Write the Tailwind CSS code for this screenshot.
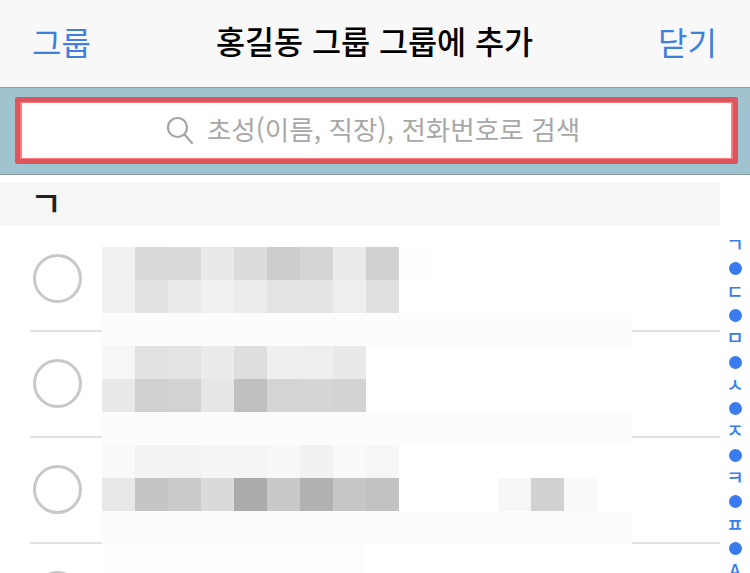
<!DOCTYPE html>
<html lang="ko">
<head>
  <meta charset="UTF-8" />
  <title>그룹에 추가</title>
  <script src="https://cdn.jsdelivr.net/npm/@tailwindcss/browser@4"></script>
</head>
<body class="bg-white font-['Noto_Sans_CJK_KR',sans-serif]">
  <div class="relative h-[573px] w-[750px] overflow-hidden">

    <!-- Header -->
    <header class="flex h-[87px] items-center justify-between bg-[#f8f8f8] pr-[33px] pl-[32px] pb-[5px]">
      <span class="text-[32px] leading-none text-[#3f7fe0]">그룹</span>
      <h1 class="text-[31.6px] leading-none font-medium text-black">홍길동 그룹 그룹에 추가</h1>
      <span class="text-[32px] leading-none text-[#3f7fe0]">닫기</span>
    </header>

    <!-- Search -->
    <div class="h-[88px] border-y border-[#8b9ea7] bg-[#a0c3d0] pt-[9px] pr-[12px] pl-[15px]">
      <div class="h-[67px] rounded-[2px] border-[5px] border-[#d9575d]">
        <div class="flex h-full items-center justify-center gap-[13px] border-x-2 border-y border-[#ff7a7c] bg-white pr-[7px] pb-[2px]">
          <svg class="h-[28px] w-[28px]" viewBox="0 0 28 28" fill="none" stroke="#a3a3a3" stroke-width="2.2">
            <circle cx="11.5" cy="11.5" r="9.5" />
            <path d="M18.5 18.5L26 27" stroke-linecap="round" />
          </svg>
          <span class="text-[26.6px] leading-none text-[#a8a8a8]">초성(이름, 직장), 전화번호로 검색</span>
        </div>
      </div>
    </div>

    <!-- Section title -->
    <div class="mt-[7px] flex h-[44px] w-[720px] items-center bg-[#f6f6f6] pb-[6px] pl-[30px]">
      <span class="text-[35px] leading-none font-medium text-[#222]">ㄱ</span>
    </div>

    <!-- Row 1 -->
    <div class="flex h-[106px]">
      <div class="ml-[30px] w-[72px] border-b-2 border-[#e2e2e4] pt-[28px] pl-[3px]">
        <div class="h-[49px] w-[49px] rounded-full border-[3px] border-[#c8c8cc]"></div>
      </div>
      <div class="w-[530px]">
        <div class="h-[21px]"></div>
        <div class="flex h-[33px]">
          <div class="w-[33px] bg-[#f1f1f1]"></div><div class="w-[33px] bg-[#d9d9d9]"></div><div class="w-[33px] bg-[#dadada]"></div><div class="w-[33px] bg-[#e9e9e9]"></div><div class="w-[33px] bg-[#dcdcdc]"></div><div class="w-[33px] bg-[#cdcdcd]"></div><div class="w-[33px] bg-[#d4d4d4]"></div><div class="w-[33px] bg-[#ebebeb]"></div><div class="w-[33px] bg-[#d1d1d1]"></div><div class="w-[33px] bg-[#fdfdfd]"></div>
        </div>
        <div class="flex h-[33px]">
          <div class="w-[33px] bg-[#f1f1f1]"></div><div class="w-[33px] bg-[#e2e2e2]"></div><div class="w-[33px] bg-[#ebebeb]"></div><div class="w-[33px] bg-[#f0f0f0]"></div><div class="w-[33px] bg-[#ececec]"></div><div class="w-[33px] bg-[#e3e3e3]"></div><div class="w-[33px] bg-[#e4e4e4]"></div><div class="w-[33px] bg-[#eeeeee]"></div><div class="w-[33px] bg-[#e0e0e0]"></div>
        </div>
        <div class="h-[19px] bg-[#fcfcfc]"></div>
      </div>
      <div class="w-[88px] border-b-2 border-[#e2e2e4]"></div>
    </div>

    <!-- Row 2 -->
    <div class="flex h-[106px]">
      <div class="ml-[30px] w-[72px] border-b-2 border-[#e2e2e4] pt-[27px] pl-[3px]">
        <div class="h-[49px] w-[49px] rounded-full border-[3px] border-[#c8c8cc]"></div>
      </div>
      <div class="w-[530px]">
        <div class="h-[14px] bg-[#fcfcfc]"></div>
        <div class="flex h-[33px]">
          <div class="w-[33px] bg-[#f6f6f6]"></div><div class="w-[33px] bg-[#e2e2e2]"></div><div class="w-[33px] bg-[#e3e3e3]"></div><div class="w-[33px] bg-[#ebebeb]"></div><div class="w-[33px] bg-[#dedede]"></div><div class="w-[33px] bg-[#efefef]"></div><div class="w-[33px] bg-[#eeeeee]"></div><div class="w-[33px] bg-[#e9e9e9]"></div>
        </div>
        <div class="flex h-[33px]">
          <div class="w-[33px] bg-[#e9e9e9]"></div><div class="w-[33px] bg-[#d0d0d0]"></div><div class="w-[33px] bg-[#d2d2d2]"></div><div class="w-[33px] bg-[#e6e6e6]"></div><div class="w-[33px] bg-[#c0c0c0]"></div><div class="w-[33px] bg-[#d4d4d4]"></div><div class="w-[33px] bg-[#d5d5d5]"></div><div class="w-[33px] bg-[#d3d3d3]"></div>
        </div>
        <div class="h-[26px] bg-[#fcfcfc]"></div>
      </div>
      <div class="w-[88px] border-b-2 border-[#e2e2e4]"></div>
    </div>

    <!-- Row 3 -->
    <div class="flex h-[106px]">
      <div class="ml-[30px] w-[72px] border-b-2 border-[#e2e2e4] pt-[27px] pl-[3px]">
        <div class="h-[49px] w-[49px] rounded-full border-[3px] border-[#c8c8cc]"></div>
      </div>
      <div class="w-[530px]">
        <div class="h-[7px] bg-[#fcfcfc]"></div>
        <div class="flex h-[33px]">
          <div class="w-[33px] bg-[#f9f9f9]"></div><div class="w-[33px] bg-[#f3f3f3]"></div><div class="w-[33px] bg-[#f3f3f3]"></div><div class="w-[33px] bg-[#f5f5f5]"></div><div class="w-[33px] bg-[#f4f4f4]"></div><div class="w-[33px] bg-[#f7f7f7]"></div><div class="w-[33px] bg-[#f1f1f1]"></div><div class="w-[33px] bg-[#f9f9f9]"></div><div class="w-[33px] bg-[#f6f6f6]"></div>
        </div>
        <div class="flex h-[33px]">
          <div class="w-[33px] bg-[#e8e8e8]"></div><div class="w-[33px] bg-[#c5c5c5]"></div><div class="w-[33px] bg-[#cbcbcb]"></div><div class="w-[33px] bg-[#dadada]"></div><div class="w-[33px] bg-[#ababab]"></div><div class="w-[33px] bg-[#c9c9c9]"></div><div class="w-[33px] bg-[#b1b1b1]"></div><div class="w-[33px] bg-[#c6c6c6]"></div><div class="w-[33px] bg-[#c2c2c2]"></div>
          <div class="w-[99px]"></div>
          <div class="w-[33px] bg-[#f6f6f6]"></div><div class="w-[33px] bg-[#d1d1d1]"></div><div class="w-[33px] bg-[#f9f9f9]"></div>
        </div>
        <div class="h-[33px] bg-[#fcfcfc]"></div>
      </div>
      <div class="w-[88px] border-b-2 border-[#e2e2e4]"></div>
    </div>

    <!-- Row 4, cut off by the window -->
    <div class="flex h-[106px]">
      <div class="ml-[30px] w-[72px] pt-[27px] pl-[3px]">
        <div class="h-[49px] w-[49px] rounded-full border-[3px] border-[#c8c8cc]"></div>
      </div>
      <div class="h-[29px] w-[261px] bg-[#fdfdfd]"></div>
    </div>

    <!-- Index bar -->
    <div class="absolute top-[234px] right-0 flex w-[30px] flex-col items-center text-[19px] leading-[19px] font-medium text-[#3a7bf0]">
      <span class="h-[23.3px]">ㄱ</span>
      <span class="flex h-[23.3px] items-center"><i class="h-[13px] w-[13px] rounded-full bg-[#3a7bf0]"></i></span>
      <span class="h-[23.3px]">ㄷ</span>
      <span class="flex h-[23.3px] items-center"><i class="h-[13px] w-[13px] rounded-full bg-[#3a7bf0]"></i></span>
      <span class="h-[23.3px]">ㅁ</span>
      <span class="flex h-[23.3px] items-center"><i class="h-[13px] w-[13px] rounded-full bg-[#3a7bf0]"></i></span>
      <span class="h-[23.3px]">ㅅ</span>
      <span class="flex h-[23.3px] items-center"><i class="h-[13px] w-[13px] rounded-full bg-[#3a7bf0]"></i></span>
      <span class="h-[23.3px]">ㅈ</span>
      <span class="flex h-[23.3px] items-center"><i class="h-[13px] w-[13px] rounded-full bg-[#3a7bf0]"></i></span>
      <span class="h-[23.3px]">ㅋ</span>
      <span class="flex h-[23.3px] items-center"><i class="h-[13px] w-[13px] rounded-full bg-[#3a7bf0]"></i></span>
      <span class="h-[23.3px]">ㅍ</span>
      <span class="flex h-[23.3px] items-center"><i class="h-[13px] w-[13px] rounded-full bg-[#3a7bf0]"></i></span>
      <span class="h-[23.3px]">A</span>
    </div>
  </div>
</body>
</html>
